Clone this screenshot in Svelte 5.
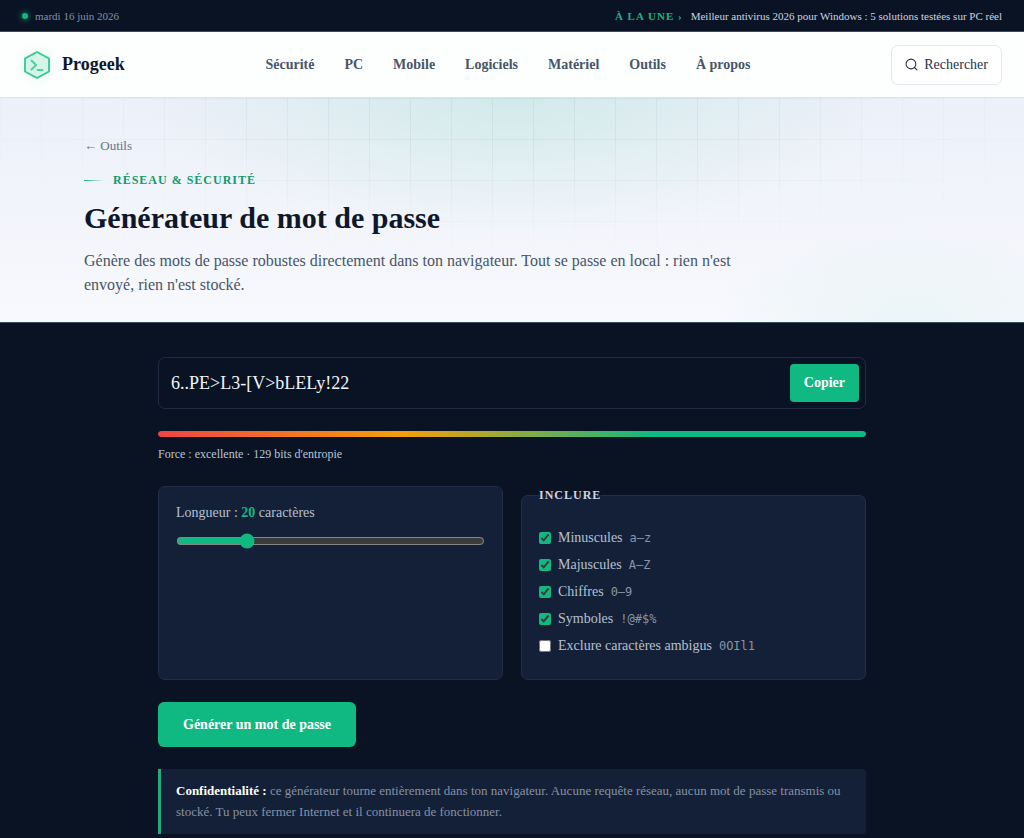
<script>
  const navLinks = ['Sécurité', 'PC', 'Mobile', 'Logiciels', 'Matériel', 'Outils', 'À propos'];

  const AMBIGUOUS = /[0OIl1]/g;

  let length = $state(20);
  let password = $state('6..PE>L3-[V>bLELy!22');
  let copyLabel = $state('Copier');
  let excludeAmbiguous = $state(false);

  let sets = $state([
    { label: 'Minuscules', sample: 'a–z', chars: 'abcdefghijklmnopqrstuvwxyz', on: true },
    { label: 'Majuscules', sample: 'A–Z', chars: 'ABCDEFGHIJKLMNOPQRSTUVWXYZ', on: true },
    { label: 'Chiffres', sample: '0–9', chars: '0123456789', on: true },
    { label: 'Symboles', sample: '!@#$%', chars: '!@#$%^&*()-_=+[]{};:,.<>?', on: true }
  ]);

  let pool = $derived.by(() => {
    const all = sets.filter((s) => s.on).map((s) => s.chars).join('');
    return excludeAmbiguous ? all.replace(AMBIGUOUS, '') : all;
  });
  let bits = $derived(pool.length ? Math.round(length * Math.log2(pool.length)) : 0);
  let strength = $derived(Math.min(100, bits));
  let rating = $derived(bits >= 100 ? 'excellente' : bits >= 70 ? 'bonne' : bits >= 45 ? 'moyenne' : 'faible');

  function generate() {
    if (!pool.length) return;
    const random = crypto.getRandomValues(new Uint32Array(length));
    password = Array.from(random, (n) => pool[n % pool.length]).join('');
  }

  async function copy() {
    await navigator.clipboard.writeText(password);
    copyLabel = 'Copié';
    setTimeout(() => (copyLabel = 'Copier'), 1500);
  }
</script>

<div class="topbar">
  <span class="date"><span class="dot"></span>mardi 16 juin 2026</span>
  <p class="news">
    <strong>À LA UNE ›</strong>
    <a href="#antivirus">Meilleur antivirus 2026 pour Windows : 5 solutions testées sur PC réel</a>
  </p>
</div>

<header class="header">
  <a class="brand" href="#accueil">
    <svg width="30" height="30" viewBox="0 0 30 30" fill="none" stroke-linecap="round" stroke-linejoin="round" aria-hidden="true">
      <path d="M15 2 L27 8.5 V21.5 L15 28 L3 21.5 V8.5 Z" fill="#d5f5e8" stroke="#34c795" stroke-width="1.8" />
      <path d="M9.500 10.500 L14 15 L9.500 19.500 M15.500 20 H20.500" stroke="#4fcfa3" stroke-width="2" />
    </svg>
    Progeek
  </a>
  <nav class="nav">
    {#each navLinks as link}
      <a href="#{link}">{link}</a>
    {/each}
  </nav>
  <button class="search" type="button">
    <svg width="13" height="13" viewBox="0 0 24 24" fill="none" stroke="currentColor" stroke-width="2" stroke-linecap="round" aria-hidden="true">
      <circle cx="11" cy="11" r="9" />
      <path d="M18 18 L22 22" />
    </svg>
    Rechercher
  </button>
</header>

<section class="hero">
  <div class="hero-inner">
    <a class="back" href="#outils">← Outils</a>
    <p class="eyebrow">RÉSEAU &amp; SÉCURITÉ</p>
    <h1>Générateur de mot de passe</h1>
    <p class="lead">
      Génère des mots de passe robustes directement dans ton navigateur. Tout se passe en local : rien n'est envoyé, rien n'est stocké.
    </p>
  </div>
</section>

<main class="tool">
  <div class="output">
    <input type="text" readonly aria-label="Mot de passe" value={password} />
    <button type="button" onclick={copy}>{copyLabel}</button>
  </div>

  <div class="meter"><div class="meter-fill" style="width: {strength}%"></div></div>
  <p class="strength">Force : {rating} · {bits} bits d'entropie</p>

  <div class="options">
    <div class="card">
      <label for="length">Longueur : <strong>{length}</strong> caractères</label>
      <input id="length" type="range" min="8" max="64" bind:value={length} />
    </div>

    <fieldset class="card">
      <legend>INCLURE</legend>
      {#each sets as set}
        <label class="check">
          <input type="checkbox" bind:checked={set.on} />
          <span>{set.label}</span>
          <code>{set.sample}</code>
        </label>
      {/each}
      <label class="check">
        <input type="checkbox" bind:checked={excludeAmbiguous} />
        <span>Exclure caractères ambigus</span>
        <code>0OIl1</code>
      </label>
    </fieldset>
  </div>

  <button class="generate" type="button" onclick={generate}>Générer un mot de passe</button>

  <p class="notice">
    <strong>Confidentialité :</strong> ce générateur tourne entièrement dans ton navigateur. Aucune requête réseau, aucun mot de passe transmis ou stocké. Tu peux fermer Internet et il continuera de fonctionner.
  </p>
</main>

<style>
  :global(body) {
    margin: 0;
    background: #0a1324;
    color: #cbd5e1;
    font-family: 'Liberation Serif', 'Times New Roman', serif;
  }

  a {
    color: inherit;
    text-decoration: none;
  }

  p {
    margin: 0;
  }

  button {
    font-family: inherit;
    cursor: pointer;
  }

  .topbar {
    display: flex;
    justify-content: space-between;
    align-items: center;
    height: 32px;
    padding: 0 22px;
    border-bottom: 1px solid #3b4a63;
    box-sizing: border-box;
    font-size: 11px;
  }

  .date {
    display: flex;
    align-items: center;
    gap: 7px;
    color: #8391a7;
  }

  .dot {
    width: 6px;
    height: 6px;
    border-radius: 50%;
    background: #10b981;
    box-shadow: 0 0 6px #10b981;
  }

  .news {
    display: flex;
    gap: 8px;
  }

  .news strong {
    color: #10b981;
    letter-spacing: 1px;
  }

  .header {
    display: flex;
    justify-content: space-between;
    align-items: center;
    height: 66px;
    padding: 0 22px;
    box-sizing: border-box;
    background: #fdfefe;
    border-bottom: 1px solid #dce5ec;
  }

  .brand {
    display: flex;
    align-items: center;
    gap: 10px;
    color: #0f172a;
    font-size: 18px;
    font-weight: 700;
  }

  .brand svg {
    filter: drop-shadow(0 0 5px rgba(16, 185, 129, 0.15));
  }

  .nav {
    display: flex;
    gap: 30px;
    color: #475569;
    font-size: 14px;
    font-weight: 700;
  }

  .search {
    display: flex;
    align-items: center;
    gap: 6px;
    height: 40px;
    padding: 0 13px;
    border: 1px solid #e2e8f0;
    border-radius: 7px;
    background: #fff;
    color: #27344a;
    font-size: 14px;
  }

  .hero {
    position: relative;
    background:
      radial-gradient(ellipse 36% 62% at 50% 0%, rgba(16, 185, 129, 0.12), transparent),
      radial-gradient(ellipse 20% 42% at 89% 100%, rgba(16, 185, 129, 0.06), transparent),
      linear-gradient(#ecf0f9, #f8f9fd);
    border-bottom: 1px solid #35505d;
  }

  .hero::before {
    content: '';
    position: absolute;
    inset: 0;
    background-image:
      linear-gradient(rgba(15, 60, 80, 0.05) 1px, transparent 1px),
      linear-gradient(90deg, rgba(15, 60, 80, 0.05) 1px, transparent 1px);
    background-size: 41px 41px;
    mask-image: radial-gradient(ellipse 60% 75% at 50% 0%, #000 30%, transparent 100%);
  }

  .hero-inner {
    position: relative;
    max-width: 856px;
    margin: 0 auto;
    padding: 38px 22px 25px;
  }

  .back {
    display: block;
    color: #64748b;
    font-size: 13px;
    line-height: 20px;
  }

  .eyebrow {
    display: flex;
    align-items: center;
    gap: 9px;
    margin-top: 15px;
    color: #109a6d;
    font-size: 12px;
    font-weight: 700;
    letter-spacing: 1px;
    line-height: 18px;
  }

  .eyebrow::before {
    content: '';
    width: 20px;
    height: 1px;
    background: linear-gradient(90deg, #10b981, transparent);
  }

  h1 {
    margin: 11px 0 13px;
    color: #0f172a;
    font-size: 30px;
    line-height: 36px;
  }

  .lead {
    max-width: 656px;
    color: #475569;
    font-size: 16px;
    line-height: 24px;
  }

  .tool {
    max-width: 708px;
    margin: 0 auto;
    padding: 34px 22px 4px;
  }

  .output {
    display: flex;
    gap: 6px;
    padding: 6px;
    border: 1px solid #202b42;
    border-radius: 7px;
  }

  .output input {
    flex: 1;
    min-width: 0;
    padding: 0 6px;
    border: 0;
    outline: 0;
    background: none;
    color: #f1f5f9;
    font-family: inherit;
    font-size: 18px;
  }

  .output button {
    height: 38px;
    padding: 0 14px;
    border: 0;
    border-radius: 4px;
    background: #10b981;
    color: #fff;
    font-size: 14px;
    font-weight: 700;
  }

  .meter {
    height: 6px;
    margin-top: 22px;
    border-radius: 3px;
    overflow: hidden;
    background: #15203a;
  }

  .meter-fill {
    height: 100%;
    border-radius: 3px;
    background: linear-gradient(90deg, #ef4444, #f59e0b 35%, #10b981 70%);
  }

  .strength {
    margin-top: 8px;
    color: #b9c4d3;
    font-size: 12px;
    line-height: 18px;
  }

  .options {
    display: grid;
    grid-template-columns: 1fr 1fr;
    gap: 18px;
    margin: 23px 0 22px;
  }

  .card {
    min-width: 0;
    margin: 0;
    padding: 16px 17px;
    border: 1px solid #202e47;
    border-radius: 7px;
    background: #142037;
    color: #b6c1d0;
    font-size: 14px;
    line-height: 20px;
  }

  .card strong {
    color: #10b981;
  }

  .card label {
    display: block;
  }

  input[type='range'] {
    display: block;
    width: 100%;
    margin: 10px 0 0;
    accent-color: #10b981;
  }

  legend {
    padding: 0;
    color: #cbd5e1;
    font-size: 12px;
    font-weight: 700;
    letter-spacing: 1px;
    line-height: 18px;
  }

  .card .check {
    display: flex;
    align-items: center;
    gap: 7px;
    padding: 3px 0 4px;
  }

  fieldset.card {
    padding-bottom: 19px;
  }

  legend + .check {
    margin-top: 5px;
  }

  input[type='checkbox'] {
    width: 12px;
    height: 12px;
    margin: 0;
    accent-color: #10b981;
  }

  code {
    color: #8794a8;
    font-family: 'DejaVu Sans Mono', monospace;
    font-size: 12px;
  }

  .generate {
    display: block;
    height: 45px;
    padding: 0 25px;
    border: 0;
    border-radius: 6px;
    background: #10b981;
    color: #fff;
    font-size: 14px;
    font-weight: 700;
  }

  .notice {
    margin-top: 22px;
    padding: 11px 15px 12px;
    border-left: 3px solid #22a97c;
    border-radius: 0 4px 4px 0;
    background: #142037;
    color: #8491a6;
    font-size: 13px;
    line-height: 21px;
  }

  .notice strong {
    color: #fff;
  }
</style>
